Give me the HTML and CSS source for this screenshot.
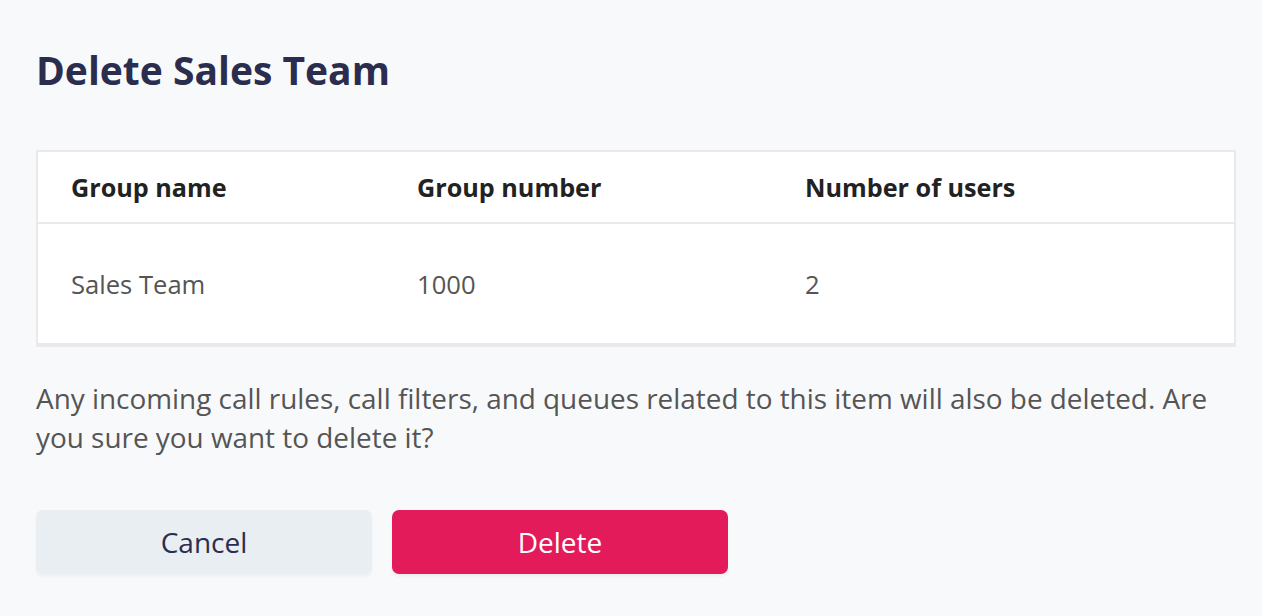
FILE: index.html
```html
<!DOCTYPE html>
<html>
<head>
<meta charset="utf-8">
<link rel="stylesheet" href="styles.css">
</head>
<body>
<div class="dialog">
  <h1 class="title">Delete Sales Team</h1>
  <div class="table">
    <div class="row head">
      <div class="cell">Group name</div>
      <div class="cell">Group number</div>
      <div class="cell">Number of users</div>
    </div>
    <div class="row body">
      <div class="cell">Sales Team</div>
      <div class="cell">1000</div>
      <div class="cell">2</div>
    </div>
  </div>
  <p class="message">Any incoming call rules, call filters, and queues related to this item will also be deleted. Are you sure you want to delete it?</p>
  <div class="actions">
    <button class="btn cancel">Cancel</button>
    <button class="btn delete">Delete</button>
  </div>
</div>
</body>
</html>
```
FILE: styles.css
```css
html, body {
  margin: 0;
  padding: 0;
  background: #f8f9fb;
}
body {
  font-family: "Open Sans", "Liberation Sans", sans-serif;
  width: 1262px;
  height: 616px;
  overflow: hidden;
}
.dialog {
  padding: 44px 26px 0 36px;
}
.title {
  margin: 0;
  font-size: 39px;
  font-weight: 700;
  color: #2b2d4e;
  line-height: 52px;
}
.table {
  margin-top: 54px;
  border: 2px solid #e9e9ec;
  border-bottom-width: 4px;
  background: #fff;
}
.row {
  display: grid;
  grid-template-columns: 346px 388px 1fr;
  padding-left: 33px;
  align-items: center;
}
.head {
  height: 70px;
  border-bottom: 2px solid #e9e9ec;
  font-weight: 700;
  color: #222;
  font-size: 25.2px;
}
.body {
  height: 119px;
  padding-top: 2px;
  box-sizing: border-box;
  color: #555;
  font-size: 25.6px;
}
.message {
  margin: 32px 0 0 0;
  font-size: 27.9px;
  line-height: 39px;
  color: #555;
}
.actions {
  display: flex;
  gap: 20px;
  margin-top: 53px;
}
.btn {
  width: 336px;
  height: 64px;
  border: none;
  border-radius: 7px;
  font-family: inherit;
  font-size: 28px;
  box-shadow: 0 3px 3px rgba(0, 0, 0, 0.04);
}
.cancel {
  background: #e9eef2;
  color: #2b2d4e;
}
.delete {
  background: #e31b5a;
  color: #fff;
}
```
